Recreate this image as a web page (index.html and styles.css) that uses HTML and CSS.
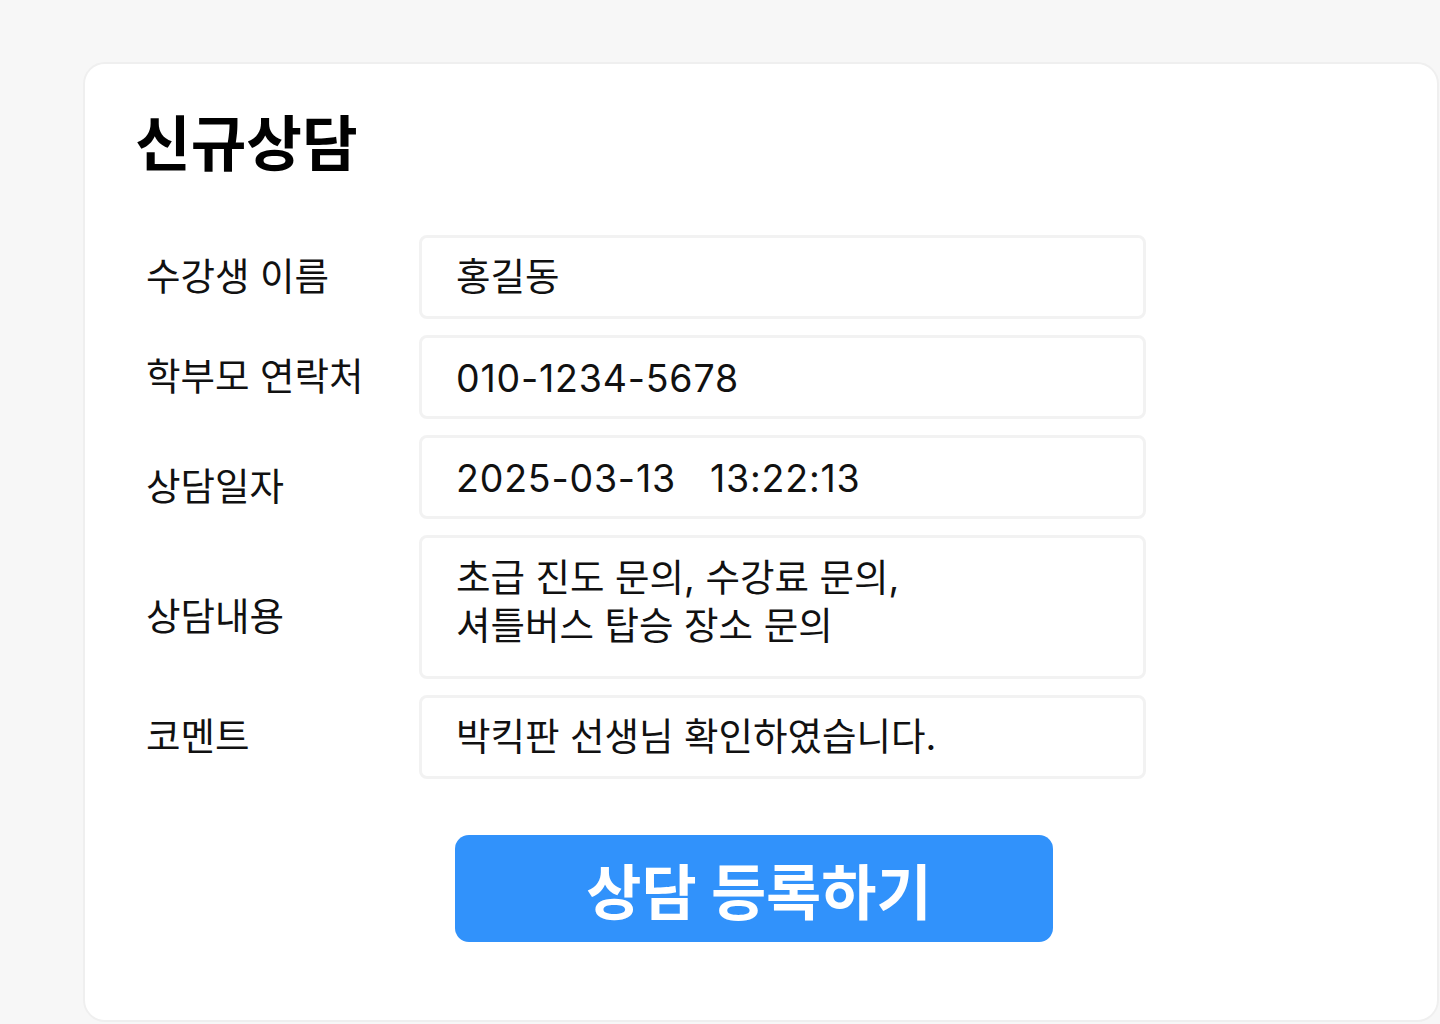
FILE: index.html
```html
<!DOCTYPE html>
<html lang="ko">
<head>
<meta charset="utf-8">
<title>신규상담</title>
<link rel="stylesheet" href="styles.css">
</head>
<body>
<main class="card">
  <h1 class="title">신규상담</h1>
  <form class="form">
    <div class="row">
      <div class="label">수강생 이름</div>
      <div class="field">홍길동</div>
    </div>
    <div class="row">
      <div class="label">학부모 연락처</div>
      <div class="field num">010-1234-5678</div>
    </div>
    <div class="row">
      <div class="label label-low">상담일자</div>
      <div class="field num pre">2025-03-13   13:22:13</div>
    </div>
    <div class="row">
      <div class="label label-low">상담내용</div>
      <div class="field area">초급 진도 문의, 수강료 문의,<br>셔틀버스 탑승 장소 문의</div>
    </div>
    <div class="row">
      <div class="label">코멘트</div>
      <div class="field">박킥판 선생님 확인하였습니다.</div>
    </div>
    <div class="actions">
      <button type="button" class="submit">상담 등록하기</button>
    </div>
  </form>
</main>
</body>
</html>
```
FILE: styles.css
```css
html, body {
  margin: 0;
  padding: 0;
}
body {
  background: #f7f7f7;
  font-family: "Inter", "Noto Sans CJK KR", sans-serif;
  color: #111;
  padding: 62px 0 0 83px;
  height: 1024px;
  box-sizing: border-box;
  overflow: hidden;
}
.card {
  box-sizing: border-box;
  width: 1356px;
  height: 960px;
  background: #fff;
  border: 2px solid #efefef;
  border-radius: 22px;
  padding: 44px 0 0 50px;
}
.title {
  margin: 0;
  font-size: 60.5px;
  font-weight: 700;
  line-height: 72px;
  color: #000;
}
.form {
  margin-top: 55px;
  padding-left: 11px;
  display: flex;
  flex-direction: column;
  gap: 16px;
}
.row {
  display: flex;
  align-items: center;
}
.label {
  width: 273px;
  font-size: 37.5px;
  line-height: 44px;
  color: #111;
}
.label-low {
  padding-top: 20px;
}
.field {
  box-sizing: border-box;
  width: 727px;
  height: 84px;
  border: 3px solid #f2f2f2;
  border-radius: 8px;
  padding: 0 0 0 34px;
  display: flex;
  align-items: center;
  font-size: 37.5px;
  line-height: 48px;
  color: #111;
}
.num {
  letter-spacing: 0.8px;
  padding-top: 3px;
}
.pre {
  white-space: pre;
}
.area {
  height: 144px;
  padding-top: 16px;
  display: block;
}
.actions {
  padding-left: 309px;
  margin-top: 40px;
}
.submit {
  width: 598px;
  height: 107px;
  border: none;
  border-radius: 14px;
  background: #3192fb;
  color: #fff;
  font-family: "Inter", "Noto Sans CJK KR", sans-serif;
  font-size: 60px;
  font-weight: 700;
  padding: 0 0 0 10px;
}
```
